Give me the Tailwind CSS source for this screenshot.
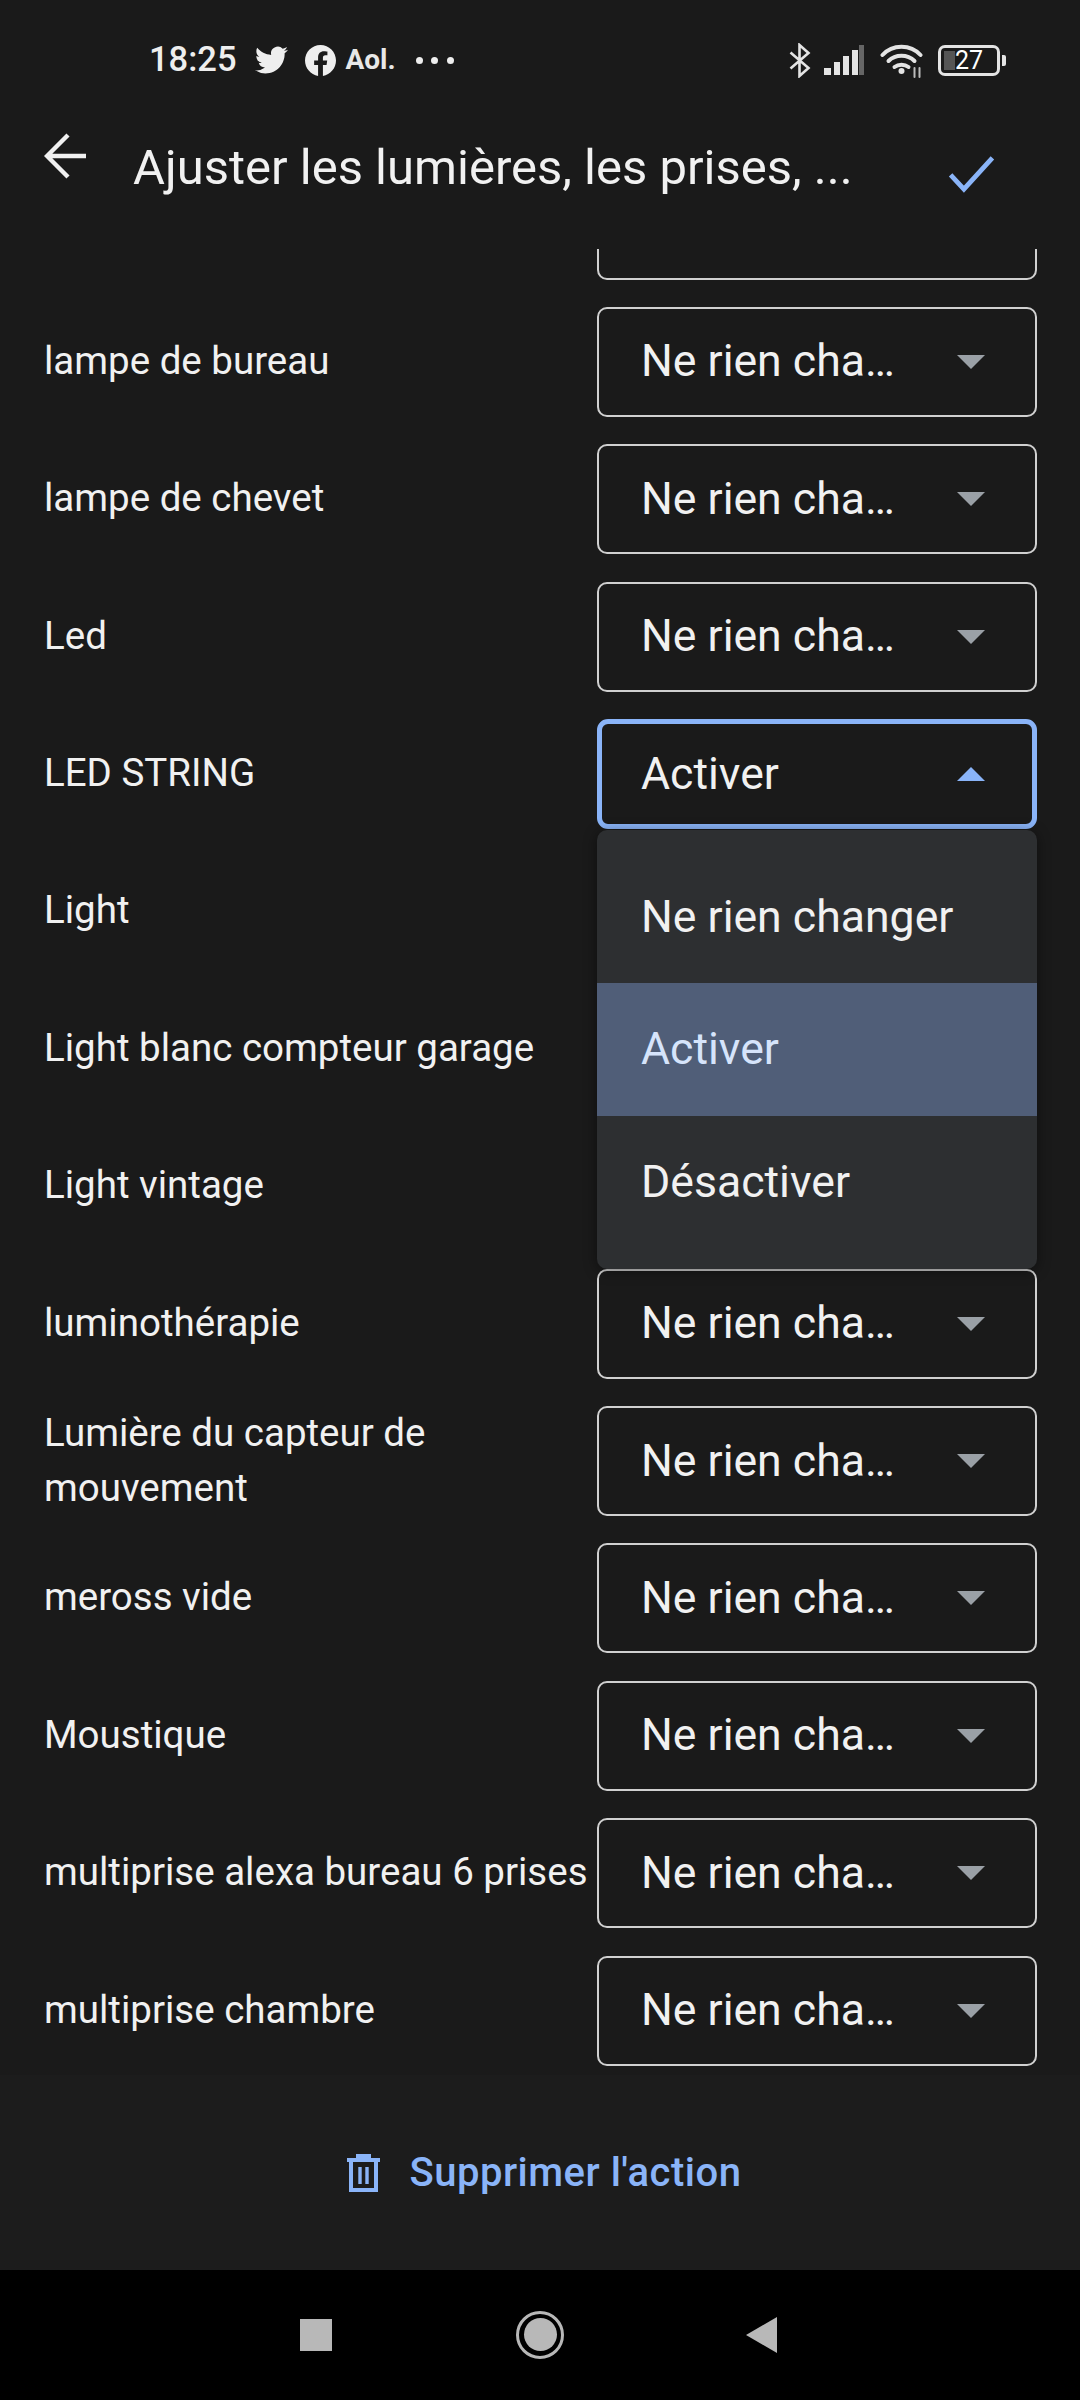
<!DOCTYPE html>
<html lang="fr">
<head>
<meta charset="utf-8">
<title>Ajuster les lumières</title>
<script src="https://cdn.jsdelivr.net/npm/@tailwindcss/browser@4"></script>
</head>
<body class="bg-black">
<div class="w-[1080px] h-[2400px] flex flex-col bg-[#1a1a1a] text-[#f1f1f1] font-['Roboto',sans-serif] overflow-hidden">

  <!-- barre d'etat -->
  <div class="h-[120px] shrink-0 flex items-center pl-[149px] pr-[74px]">
    <span class="text-[34.5px] font-medium text-[#eeeeee]">18:25</span>
    <svg class="w-[33px] h-[28px] ml-[18px] fill-[#eeeeee]" viewBox="0 0 24 20"><path d="M23.953 2.57a10 10 0 01-2.825.775 4.958 4.958 0 002.163-2.723c-.951.555-2.005.959-3.127 1.184a4.92 4.92 0 00-8.384 4.482C7.69 6.095 4.067 4.13 1.64 1.162a4.822 4.822 0 00-.666 2.475c0 1.71.87 3.213 2.188 4.096a4.904 4.904 0 01-2.228-.616v.06a4.923 4.923 0 003.946 4.827 4.996 4.996 0 01-2.212.085 4.936 4.936 0 004.604 3.417 9.867 9.867 0 01-6.102 2.105c-.39 0-.779-.023-1.17-.067a13.995 13.995 0 007.557 2.209c9.053 0 13.998-7.496 13.998-13.985 0-.21 0-.42-.015-.63A9.935 9.935 0 0024 2.59z"/></svg>
    <svg class="w-[31px] h-[31px] ml-[17px] fill-[#eeeeee]" viewBox="0 0 24 24"><path d="M24 12.073c0-6.627-5.373-12-12-12s-12 5.373-12 12c0 5.99 4.388 10.954 10.125 11.854v-8.385H7.078v-3.47h3.047V9.43c0-3.007 1.792-4.669 4.533-4.669 1.312 0 2.686.235 2.686.235v2.953H15.83c-1.491 0-1.956.925-1.956 1.874v2.25h3.328l-.532 3.47h-2.796v8.385C19.612 23.027 24 18.062 24 12.073z"/></svg>
    <span class="ml-[10px] text-[28px] font-bold text-[#e8e8e8]">Aol.</span>
    <div class="flex gap-[8.5px] ml-[20px]">
      <span class="w-[7px] h-[7px] rounded-full bg-[#eeeeee]"></span>
      <span class="w-[7px] h-[7px] rounded-full bg-[#eeeeee]"></span>
      <span class="w-[7px] h-[7px] rounded-full bg-[#eeeeee]"></span>
    </div>
    <div class="ml-auto flex items-center">
      <svg class="w-[22px] h-[35px]" viewBox="0 0 22 35" fill="none" stroke="#e4e4e4" stroke-width="2.6"><path d="M1.5 9.5 19.5 25 10.5 33V2l9 8L1.5 25.5"/></svg>
      <svg class="w-[40px] h-[30px] ml-[13px]" viewBox="0 0 40 30"><rect x="0" y="23" width="7" height="7" fill="#e4e4e4"/><rect x="10" y="17" width="6" height="13" fill="#e4e4e4"/><rect x="19" y="11" width="6" height="19" fill="#e4e4e4"/><rect x="28" y="5" width="6" height="25" fill="#e4e4e4"/><rect x="35" y="0" width="5" height="30" fill="#666666"/></svg>
      <svg class="w-[43px] h-[35px] ml-[16px]" viewBox="0 0 42 35" fill="none" stroke="#e4e4e4" stroke-width="4" stroke-linecap="round"><path d="M2 12C12 1 30 1 40 12"/><path d="M8 18c7-7 19-7 26 0"/><path d="M14 24c4-3 10-3 14 0"/><circle cx="21" cy="28" r="3" fill="#e4e4e4" stroke="none"/><path d="M34 25v9M39 25v9" stroke-width="2" stroke="#bbbbbb"/></svg>
      <div class="flex items-center ml-[15px]">
        <div class="relative w-[62px] h-[31px] rounded-[7px] border-[3px] border-[#e4e4e4] flex items-center justify-center overflow-hidden">
          <span class="absolute left-[3px] top-[3px] bottom-[3px] w-[11px] bg-[#555555]"></span>
          <span class="relative text-[25px] leading-none text-white">27</span>
        </div>
        <span class="w-[4px] h-[11px] rounded-r-[2px] bg-[#e4e4e4] ml-[2px]"></span>
      </div>
    </div>
  </div>

  <!-- en-tete -->
  <div class="h-[129px] shrink-0 flex items-start relative">
    <svg class="w-[44px] h-[46px] ml-[44px] mt-[13px]" viewBox="0 0 44 46" fill="none" stroke="#f1f1f1" stroke-width="4.4"><path d="M42 23H4M24 2 3 23l21 21"/></svg>
    <span class="ml-[45px] mt-[20px] text-[49px] leading-[56px] text-[#f1f1f1] whitespace-nowrap">Ajuster les lumières, les prises, ...</span>
    <svg class="absolute left-[948px] top-[35px] w-[47px] h-[38px]" viewBox="0 0 48 40" fill="none" stroke="#8ab4f8" stroke-width="5"><path d="M2 21l14 15L46 3"/></svg>
  </div>

  <!-- liste des appareils -->
  <div class="h-[1826px] shrink-0 overflow-hidden relative">
    <div class="-mt-[79.5px] flex flex-col gap-[27.4px] text-[38.5px] leading-[55px]">

      <div class="h-[110px] flex items-center justify-between pl-[44px] pr-[43px]"><span></span>
        <div class="w-[440px] h-[110px] border-2 border-[#d0d0d0] rounded-[10px]"></div>
      </div>
      <div class="h-[110px] flex items-center justify-between pl-[44px] pr-[43px]"><span class="pb-[3px]">lampe de bureau</span>
        <div class="w-[440px] h-[110px] border-2 border-[#d0d0d0] rounded-[10px] flex items-center pl-[42px] pr-[50px] text-[44.6px]"><span>Ne rien cha…</span><span class="ml-auto w-0 h-0 border-x-[14px] border-x-transparent border-t-[14px] border-t-[#9aa0a6]"></span></div>
      </div>
      <div class="h-[110px] flex items-center justify-between pl-[44px] pr-[43px]"><span class="pb-[3px]">lampe de chevet</span>
        <div class="w-[440px] h-[110px] border-2 border-[#d0d0d0] rounded-[10px] flex items-center pl-[42px] pr-[50px] text-[44.6px]"><span>Ne rien cha…</span><span class="ml-auto w-0 h-0 border-x-[14px] border-x-transparent border-t-[14px] border-t-[#9aa0a6]"></span></div>
      </div>
      <div class="h-[110px] flex items-center justify-between pl-[44px] pr-[43px]"><span class="pb-[3px]">Led</span>
        <div class="w-[440px] h-[110px] border-2 border-[#d0d0d0] rounded-[10px] flex items-center pl-[42px] pr-[50px] text-[44.6px]"><span>Ne rien cha…</span><span class="ml-auto w-0 h-0 border-x-[14px] border-x-transparent border-t-[14px] border-t-[#9aa0a6]"></span></div>
      </div>
      <div class="h-[110px] flex items-center justify-between pl-[44px] pr-[43px]"><span class="pb-[3px]">LED STRING</span>
        <div class="w-[440px] h-[110px] border-[5px] border-[#8ab4f8] rounded-[11px] flex items-center pl-[39px] pr-[47px] text-[44.6px]"><span>Activer</span><span class="ml-auto w-0 h-0 border-x-[14px] border-x-transparent border-b-[14px] border-b-[#8ab4f8]"></span></div>
      </div>
      <div class="h-[110px] flex items-center justify-between pl-[44px] pr-[43px]"><span class="pb-[3px]">Light</span></div>
      <div class="h-[110px] flex items-center justify-between pl-[44px] pr-[43px]"><span class="pb-[3px]">Light blanc compteur garage</span></div>
      <div class="h-[110px] flex items-center justify-between pl-[44px] pr-[43px]"><span class="pb-[3px]">Light vintage</span></div>
      <div class="h-[110px] flex items-center justify-between pl-[44px] pr-[43px]"><span class="pb-[3px]">luminothérapie</span>
        <div class="w-[440px] h-[110px] border-2 border-[#d0d0d0] rounded-[10px] flex items-center pl-[42px] pr-[50px] text-[44.6px]"><span>Ne rien cha…</span><span class="ml-auto w-0 h-0 border-x-[14px] border-x-transparent border-t-[14px] border-t-[#9aa0a6]"></span></div>
      </div>
      <div class="h-[110px] flex items-center justify-between pl-[44px] pr-[43px]"><span class="pb-[3px] w-[500px]">Lumière du capteur de mouvement</span>
        <div class="w-[440px] h-[110px] border-2 border-[#d0d0d0] rounded-[10px] flex items-center pl-[42px] pr-[50px] text-[44.6px]"><span>Ne rien cha…</span><span class="ml-auto w-0 h-0 border-x-[14px] border-x-transparent border-t-[14px] border-t-[#9aa0a6]"></span></div>
      </div>
      <div class="h-[110px] flex items-center justify-between pl-[44px] pr-[43px]"><span class="pb-[3px]">meross vide</span>
        <div class="w-[440px] h-[110px] border-2 border-[#d0d0d0] rounded-[10px] flex items-center pl-[42px] pr-[50px] text-[44.6px]"><span>Ne rien cha…</span><span class="ml-auto w-0 h-0 border-x-[14px] border-x-transparent border-t-[14px] border-t-[#9aa0a6]"></span></div>
      </div>
      <div class="h-[110px] flex items-center justify-between pl-[44px] pr-[43px]"><span class="pb-[3px]">Moustique</span>
        <div class="w-[440px] h-[110px] border-2 border-[#d0d0d0] rounded-[10px] flex items-center pl-[42px] pr-[50px] text-[44.6px]"><span>Ne rien cha…</span><span class="ml-auto w-0 h-0 border-x-[14px] border-x-transparent border-t-[14px] border-t-[#9aa0a6]"></span></div>
      </div>
      <div class="h-[110px] flex items-center justify-between pl-[44px] pr-[43px]"><span class="pb-[3px] whitespace-nowrap">multiprise alexa bureau 6 prises</span>
        <div class="w-[440px] h-[110px] border-2 border-[#d0d0d0] rounded-[10px] flex items-center pl-[42px] pr-[50px] text-[44.6px]"><span>Ne rien cha…</span><span class="ml-auto w-0 h-0 border-x-[14px] border-x-transparent border-t-[14px] border-t-[#9aa0a6]"></span></div>
      </div>
      <div class="h-[110px] flex items-center justify-between pl-[44px] pr-[43px]"><span class="pb-[3px]">multiprise chambre</span>
        <div class="w-[440px] h-[110px] border-2 border-[#d0d0d0] rounded-[10px] flex items-center pl-[42px] pr-[50px] text-[44.6px]"><span>Ne rien cha…</span><span class="ml-auto w-0 h-0 border-x-[14px] border-x-transparent border-t-[14px] border-t-[#9aa0a6]"></span></div>
      </div>
    </div>

    <!-- menu deroulant ouvert -->
    <div class="absolute left-[597px] top-[581px] w-[440px] h-[439px] py-[21px] rounded-[10px] bg-[#2d2f31] shadow-[0_2px_14px_rgba(0,0,0,0.45)] text-[44.6px]">
      <div class="h-[132px] flex items-center pl-[44px]">Ne rien changer</div>
      <div class="h-[133px] flex items-center pl-[44px] bg-[#505e78] text-[#d6e4fb]">Activer</div>
      <div class="h-[132px] flex items-center pl-[44px]">Désactiver</div>
    </div>
  </div>

  <!-- supprimer -->
  <div class="h-[195px] shrink-0 bg-[#1c1c1c] flex items-center justify-center pl-[8px]">
    <svg class="w-[33px] h-[38px]" viewBox="0 0 33 38" fill="none" stroke="#8ab4f8" stroke-width="4"><path d="M0 6h33M11 4V2h11v2"/><path d="M4 7v29h25V7"/><path d="M13 13v17M20 13v17" stroke-width="3.4"/></svg>
    <span class="ml-[30px] text-[40px] tracking-[0.5px] font-medium text-[#8ab4f8]">Supprimer l'action</span>
  </div>

  <!-- navigation -->
  <div class="h-[130px] shrink-0 bg-black flex items-center pl-[300px] pb-[1px]">
    <span class="w-[32px] h-[32px] bg-[#b8b8b8]"></span>
    <span class="ml-[184px] w-[48px] h-[48px] rounded-full border-[3px] border-[#b8b8b8] flex items-center justify-center"><span class="w-[33px] h-[33px] rounded-full bg-[#b8b8b8]"></span></span>
    <span class="ml-[182px] w-0 h-0 border-y-[18px] border-y-transparent border-r-[31px] border-r-[#b8b8b8]"></span>
  </div>
</div>
</body>
</html>
